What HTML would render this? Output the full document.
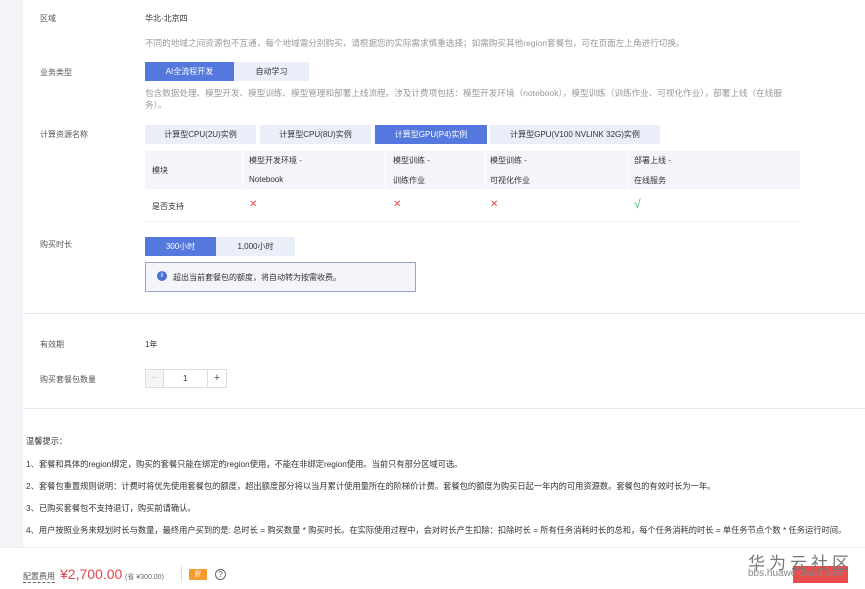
<!DOCTYPE html>
<html><head><meta charset="utf-8"><style>
*{margin:0;padding:0;box-sizing:border-box}
body{width:865px;height:589px;overflow:hidden;background:#fff;font-family:"Liberation Sans","Noto Sans CJK SC",sans-serif;color:#333;font-size:8px;position:relative}
.a{position:absolute;white-space:nowrap}
.strip{position:absolute;left:0;top:0;width:23px;height:548px;background:#f3f4f7}
.lbl{color:#555;font-size:8px}
.desc{color:#999;font-size:8.6px}
.note{font-size:8.25px}
.btn{position:absolute;height:19px;line-height:19px;text-align:center;font-size:8px;background:#e9eef8;color:#333}
.on{background:#5478de;color:#fff}
.hr{position:absolute;left:23px;right:0;height:1px;background:#e8e8ee}
.x{color:#e54545;font-size:10px}
</style></head><body>
<div class="strip"></div>
<div class="a lbl" style="left:40px;top:13px">区域</div>
<div class="a" style="left:145px;top:13px;font-size:8px">华北-北京四</div>
<div class="a desc" style="left:145px;top:37px">不同的地域之间资源包不互通，每个地域需分别购买，请根据您的实际需求慎重选择；如需购买其他region套餐包，可在页面左上角进行切换。</div>
<div class="a lbl" style="left:40px;top:67px">业务类型</div>
<div class="btn on" style="left:145px;top:62px;width:89px">AI全流程开发</div>
<div class="btn" style="left:234px;top:62px;width:75px">自动学习</div>
<div class="a desc" style="left:145px;top:87px">包含数据处理、模型开发、模型训练、模型管理和部署上线流程。涉及计费项包括：模型开发环境（notebook），模型训练（训练作业、可视化作业），部署上线（在线服</div>
<div class="a desc" style="left:145px;top:99px">务）。</div>
<div class="a lbl" style="left:40px;top:129px">计算资源名称</div>
<div class="btn" style="left:145px;top:125px;width:111px">计算型CPU(2U)实例</div>
<div class="btn" style="left:260px;top:125px;width:111px">计算型CPU(8U)实例</div>
<div class="btn on" style="left:375px;top:125px;width:112px">计算型GPU(P4)实例</div>
<div class="btn" style="left:490px;top:125px;width:170px">计算型GPU(V100 NVLINK 32G)实例</div>
<div class="a" style="left:145px;top:151px;width:655px;height:38px;background:#f3f5fa"></div>
<div class="a" style="left:242px;top:151px;width:1px;height:38px;background:#fff"></div>
<div class="a" style="left:385px;top:151px;width:1px;height:38px;background:#fff"></div>
<div class="a" style="left:485px;top:151px;width:1px;height:38px;background:#fff"></div>
<div class="a" style="left:627px;top:151px;width:1px;height:38px;background:#fff"></div>
<div class="a" style="left:152px;top:165px">模块</div>
<div class="a" style="left:249px;top:155px">模型开发环境 -</div><div class="a" style="left:249px;top:175px">Notebook</div>
<div class="a" style="left:393px;top:155px">模型训练 -</div><div class="a" style="left:393px;top:175px">训练作业</div>
<div class="a" style="left:490px;top:155px">模型训练 -</div><div class="a" style="left:490px;top:175px">可视化作业</div>
<div class="a" style="left:634px;top:155px">部署上线 -</div><div class="a" style="left:634px;top:175px">在线服务</div>
<div class="a" style="left:152px;top:201px">是否支持</div>
<div class="a x" style="left:249px;top:199px">✕</div>
<div class="a x" style="left:393px;top:199px">✕</div>
<div class="a x" style="left:490px;top:199px">✕</div>
<div class="a" style="left:634px;top:197px;color:#3cb371;font-size:12px">√</div>
<div class="a" style="left:145px;top:221px;width:655px;height:1px;background:#eceef3"></div>
<div class="a lbl" style="left:40px;top:239px">购买时长</div>
<div class="btn on" style="left:145px;top:237px;width:71px">300小时</div>
<div class="btn" style="left:216px;top:237px;width:79px">1,000小时</div>
<div class="a" style="left:145px;top:262px;width:271px;height:30px;border:1px solid #9aa4c8;background:#f3f5fb"></div>
<div class="a" style="left:157px;top:271px;width:10px;height:10px;border-radius:50%;background:#4a6fd6;color:#fff;font-size:7px;text-align:center;line-height:10px;font-weight:bold">i</div>
<div class="a" style="left:173px;top:272px">超出当前套餐包的额度，将自动转为按需收费。</div>
<div class="hr" style="top:313px"></div>
<div class="a lbl" style="left:40px;top:339px">有效期</div>
<div class="a" style="left:145px;top:339px">1年</div>
<div class="a lbl" style="left:40px;top:374px">购买套餐包数量</div>
<div class="a" style="left:145px;top:369px;width:82px;height:19px;border:1px solid #ddd"></div>
<div class="a" style="left:146px;top:370px;width:18px;height:17px;background:#f5f5f5;border-right:1px solid #ddd;color:#ccc;text-align:center;line-height:17px;font-size:10px">−</div>
<div class="a" style="left:207px;top:370px;width:19px;height:17px;border-left:1px solid #ddd;text-align:center;line-height:17px;font-size:11px;color:#555">+</div>
<div class="a" style="left:183px;top:374px">1</div>
<div class="hr" style="top:408px"></div>
<div class="a note" style="left:26px;top:435px">温馨提示：</div>
<div class="a note" style="left:26px;top:458px">1、套餐和具体的region绑定，购买的套餐只能在绑定的region使用，不能在非绑定region使用。当前只有部分区域可选。</div>
<div class="a note" style="left:26px;top:480px">2、套餐包重置规则说明：计费时将优先使用套餐包的额度，超出额度部分将以当月累计使用量所在的阶梯价计费。套餐包的额度为购买日起一年内的可用资源数。套餐包的有效时长为一年。</div>
<div class="a note" style="left:26px;top:502px">3、已购买套餐包不支持退订，购买前请确认。</div>
<div class="a note" style="left:26px;top:524px">4、用户按照业务来规划时长与数量，最终用户买到的是: 总时长 = 购买数量 * 购买时长。在实际使用过程中，会对时长产生扣除：扣除时长 = 所有任务消耗时长的总和，每个任务消耗的时长 = 单任务节点个数 * 任务运行时间。</div>
<div class="a" style="left:0;top:547px;width:865px;height:1px;background:#eee"></div>
<div class="a" style="left:23px;top:571px;border-bottom:1px dashed #666;color:#555">配置费用</div>
<div class="a" style="left:60px;top:566px;color:#e0454b;font-size:14px">¥2,700.00</div>
<div class="a" style="left:125px;top:572px;font-size:7px;color:#666">(省 ¥300.00)</div>
<div class="a" style="left:181px;top:566px;width:1px;height:16px;background:#ddd"></div>
<div class="a" style="left:189px;top:569px;width:18px;height:11px;background:#f59a2f;color:#fff;font-size:7px;text-align:center;line-height:11px;border-radius:1px">折</div>
<div class="a" style="left:215px;top:569px;width:11px;height:11px;border:1px solid #666;border-radius:50%;font-size:8px;text-align:center;line-height:9px;color:#555">?</div>
<div class="a" style="left:793px;top:566px;width:55px;height:17px;background:#e84c4c"></div>
<div class="a" style="left:748px;top:549px;font-size:17px;color:#777;letter-spacing:4px">华为云社区</div>
<div class="a" style="left:748px;top:568px;font-size:10px;color:#888">bbs.huaweicloud.com</div>
</body></html>
